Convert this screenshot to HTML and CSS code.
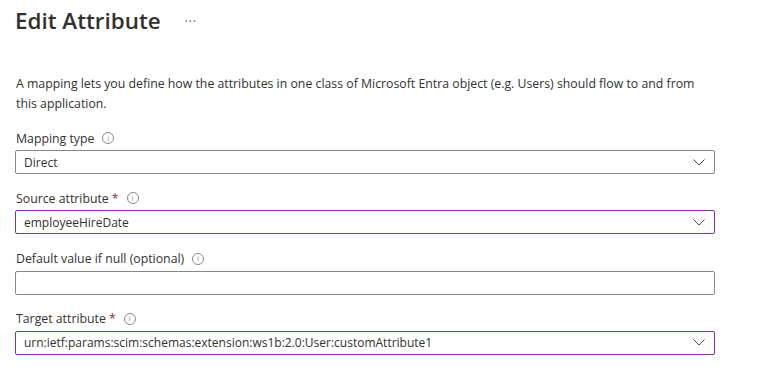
FILE: index.html
```html
<!DOCTYPE html>
<html>
<head>
  <meta charset="UTF-8" />
  <title>Edit Attribute</title>
  <link rel="stylesheet" href="styles.css">
</head>
<body>

  <div class="blade">
    <!-- Blade header -->
    <div class="blade-header">
      <h1>Edit Attribute</h1>
      <span class="more">&middot;&middot;&middot;</span>
    </div>

    <p class="intro">A mapping lets you define how the attributes in one class of Microsoft Entra object (e.g. Users) should flow to and from this application.</p>

    <!-- Mapping type -->
    <div class="field">
      <label>Mapping type <span class="info">i</span></label>
      <div class="select">
        <span>Direct</span>
        <svg class="chevron" width="12" height="7" viewBox="0 0 12 7"><path d="M0.5 0.5 L6 6 L11.5 0.5" fill="none" stroke="#444" stroke-width="1"/></svg>
      </div>
    </div>

    <!-- Source attribute -->
    <div class="field">
      <label>Source attribute <span class="req">*</span> <span class="info">i</span></label>
      <div class="select dirty">
        <span>employeeHireDate</span>
        <svg class="chevron" width="12" height="7" viewBox="0 0 12 7"><path d="M0.5 0.5 L6 6 L11.5 0.5" fill="none" stroke="#444" stroke-width="1"/></svg>
      </div>
    </div>

    <!-- Default value -->
    <div class="field">
      <label>Default value if null (optional) <span class="info">i</span></label>
      <input type="text" class="textbox">
    </div>

    <!-- Target attribute -->
    <div class="field">
      <label>Target attribute <span class="req">*</span> <span class="info">i</span></label>
      <div class="select dirty">
        <span>urn:ietf:params:scim:schemas:extension:ws1b:2.0:User:customAttribute1</span>
        <svg class="chevron" width="12" height="7" viewBox="0 0 12 7"><path d="M0.5 0.5 L6 6 L11.5 0.5" fill="none" stroke="#444" stroke-width="1"/></svg>
      </div>
    </div>
  </div>

</body>
</html>
```

FILE: styles.css
```css
/* Base font */
body {
  margin: 0;
  font-family: "Open Sans", "Noto Sans", sans-serif;
  font-size: 12.3px;
  color: #323130;
  background: #fff;
}

.blade {
  padding: 5px 0 0 15px;
  width: 700px;
}

/* Title row */
.blade-header {
  display: flex;
  align-items: center;
  gap: 24px;
  height: 32px;
}

.blade-header h1 {
  margin: 0;
  font-size: 22.4px;
  font-weight: 600;
  line-height: 32px;
  color: #323130;
}

.more {
  color: #605e5c;
  font-size: 12px;
  letter-spacing: 1px;
}

.intro {
  margin: 37px 0 14px 1px;
  line-height: 20px;
}

/* Form fields */
.field {
  margin-bottom: 14.34px;
}

.field label {
  display: flex;
  align-items: center;
  gap: 4px;
  height: 20px;
  margin: 0 0 2px 1px;
}

.req {
  color: #a4262c;
  margin-left: -1px;
}

.info {
  display: inline-flex;
  align-items: center;
  justify-content: center;
  width: 10px;
  height: 10px;
  margin-left: 4px;
  border: 1px solid #8a8886;
  border-radius: 50%;
  font-size: 7px;
  line-height: 1;
  color: #8a8886;
}

.select,
.textbox {
  box-sizing: border-box;
  display: flex;
  align-items: center;
  justify-content: space-between;
  width: 700px;
  height: 24px;
  padding: 0 9px 0 8px;
  border: 1px solid #8a8886;
  border-radius: 2px;
  font-family: inherit;
  font-size: 12px;
  color: #323130;
}

.select.dirty {
  border-color: #8a2da5;
}

.chevron {
  flex: none;
}
```
